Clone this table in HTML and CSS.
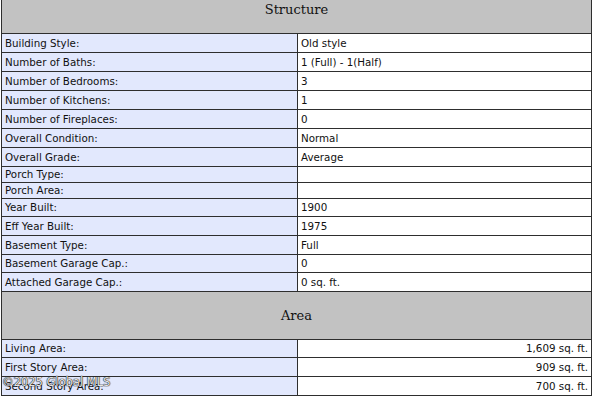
FILE: index.html
```html
<!DOCTYPE html>
<html>
<head>
<meta charset="utf-8">
<link rel="stylesheet" href="styles.css">
</head>
<body>
<div class="page">
<table class="info">
  <colgroup><col class="c-label"><col class="c-value"></colgroup>
  <tr><th colspan="2" class="section">Structure</th></tr>
  <tr><td class="label">Building Style:</td><td class="value">Old style</td></tr>
  <tr><td class="label">Number of Baths:</td><td class="value">1 (Full) - 1(Half)</td></tr>
  <tr><td class="label">Number of Bedrooms:</td><td class="value">3</td></tr>
  <tr><td class="label">Number of Kitchens:</td><td class="value">1</td></tr>
  <tr><td class="label">Number of Fireplaces:</td><td class="value">0</td></tr>
  <tr><td class="label">Overall Condition:</td><td class="value">Normal</td></tr>
  <tr><td class="label">Overall Grade:</td><td class="value">Average</td></tr>
  <tr class="short"><td class="label">Porch Type:</td><td class="value"></td></tr>
  <tr class="short"><td class="label">Porch Area:</td><td class="value"></td></tr>
  <tr class="mid"><td class="label">Year Built:</td><td class="value">1900</td></tr>
  <tr><td class="label">Eff Year Built:</td><td class="value">1975</td></tr>
  <tr><td class="label">Basement Type:</td><td class="value">Full</td></tr>
  <tr class="mid"><td class="label">Basement Garage Cap.:</td><td class="value">0</td></tr>
  <tr><td class="label">Attached Garage Cap.:</td><td class="value">0 sq. ft.</td></tr>
  <tr><th colspan="2" class="section">Area</th></tr>
  <tr class="mid"><td class="label">Living Area:</td><td class="value num">1,609 sq. ft.</td></tr>
  <tr><td class="label">First Story Area:</td><td class="value num">909 sq. ft.</td></tr>
  <tr><td class="label">Second Story Area:</td><td class="value num">700 sq. ft.</td></tr>
</table>
<div class="watermark">©2025 Global MLS</div>
</div>
</body>
</html>
```
FILE: styles.css
```css
html, body {
  margin: 0;
  padding: 0;
  background: #fff;
  overflow: hidden;
}
.page {
  position: relative;
  width: 600px;
  height: 399px;
  overflow: hidden;
}
.info {
  margin: -15px 0 0 1px;
  width: 591px;
  border-collapse: collapse;
  table-layout: fixed;
  font-family: "DejaVu Sans", Verdana, sans-serif;
  font-size: 10.3px;
  color: #111;
}
.c-label { width: 296px; }
.info td, .info th {
  border: 1px solid #2e2e2e;
}
.section {
  background: #c2c2c2;
  height: 47px;
  padding: 0;
  font-family: "DejaVu Serif", Georgia, serif;
  font-weight: normal;
  font-size: 13px;
  color: #111;
  text-align: center;
  vertical-align: middle;
}
.info td {
  padding: 2px 3px;
  line-height: 14px;
  height: 14px;
}
.label {
  background: #e2e8fd;
}
.value {
  background: #fff;
}
.num {
  text-align: right;
  padding-right: 4px;
}
.short td {
  height: 11px;
  line-height: 11px;
}
.mid td {
  height: 13px;
  line-height: 13px;
}
.watermark {
  position: absolute;
  left: 2px;
  top: 375px;
  font-family: "DejaVu Sans", Verdana, sans-serif;
  font-size: 11.5px;
  color: rgba(255,255,255,0.9);
  text-shadow: 0 0 1px #222, 0 0 1px #222, 0 0 1px #222;
}
```
